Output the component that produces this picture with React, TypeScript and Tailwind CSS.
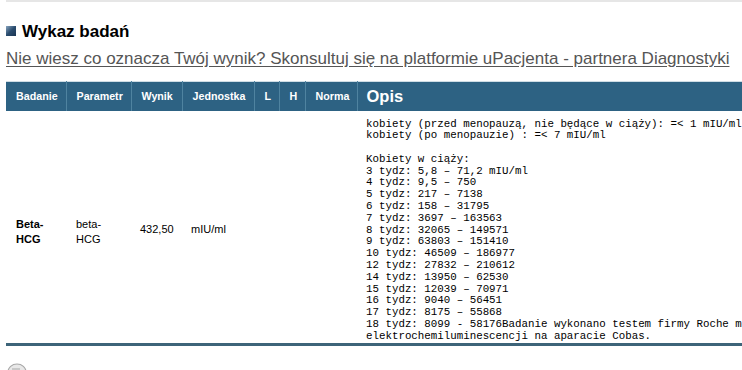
import React from "react";

const opisLines = [
  "kobiety (przed menopauzą, nie będące w ciąży): =< 1 mIU/ml",
  "kobiety (po menopauzie) : =< 7 mIU/ml",
  "",
  "Kobiety w ciąży:",
  "3 tydz: 5,8 – 71,2 mIU/ml",
  "4 tydz: 9,5 – 750",
  "5 tydz: 217 – 7138",
  "6 tydz: 158 – 31795",
  "7 tydz: 3697 – 163563",
  "8 tydz: 32065 – 149571",
  "9 tydz: 63803 – 151410",
  "10 tydz: 46509 – 186977",
  "12 tydz: 27832 – 210612",
  "14 tydz: 13950 – 62530",
  "15 tydz: 12039 – 70971",
  "16 tydz: 9040 – 56451",
  "17 tydz: 8175 – 55868",
  "18 tydz: 8099 - 58176Badanie wykonano testem firmy Roche metodą",
  "elektrochemiluminescencji na aparacie Cobas.",
];

export default function App() {
  const th =
    "h-[29px] pl-[10px] pr-0 text-left align-middle font-bold text-white text-[10.7px] border-l border-[#4f83a0]";
  return (
    <div
      className="w-[742px] h-[370px] overflow-hidden bg-white relative"
      style={{ fontFamily: '"Liberation Sans", Arial, sans-serif' }}
    >
      <div className="ml-[6px] h-[2px] bg-[#e6e6e6]" />
      <div className="pl-[6px]">
        <div className="flex items-center mt-[21px] h-[16px]">
          <div className="w-[10px] h-[10px] bg-gradient-to-br from-[#8aa6c0] via-[#2a4c6e] to-[#1a3552]" />
          <div className="ml-[6px] text-[17px] font-bold text-black leading-none">
            Wykaz badań
          </div>
        </div>
        <div className="mt-[10px] text-[17px] leading-[20px] text-[#555555] underline underline-offset-[2px] whitespace-nowrap">
          Nie wiesz co oznacza Twój wynik? Skonsultuj się na platformie uPacjenta - partnera Diagnostyki
        </div>
        <table className="mt-[12px] border-collapse w-[900px] table-fixed border-t border-[#cfdde5]">
          <colgroup>
            <col className="w-[60px]" />
            <col className="w-[65px]" />
            <col className="w-[51px]" />
            <col className="w-[72px]" />
            <col className="w-[25px]" />
            <col className="w-[26px]" />
            <col className="w-[52px]" />
            <col />
          </colgroup>
          <thead>
            <tr className="bg-[#2d6283]">
              <th className={th + " border-l-0"}>Badanie</th>
              <th className={th}>Parametr</th>
              <th className={th}>Wynik</th>
              <th className={th}>Jednostka</th>
              <th className={th}>L</th>
              <th className={th}>H</th>
              <th className={th}>Norma</th>
              <th className="h-[29px] pl-[9px] text-left align-middle font-bold text-white text-[16.5px] border-l border-[#4f83a0]">
                Opis
              </th>
            </tr>
          </thead>
          <tbody>
            <tr className="border-b-[3px] border-[#3d6479] text-[11px] text-black">
              <td className="pl-[10px] pt-[10px] align-middle font-bold leading-[15px]">
                Beta-
                <br />
                HCG
              </td>
              <td className="pl-[10px] pt-[10px] align-middle leading-[15px]">
                beta-
                <br />
                HCG
              </td>
              <td className="pl-[9px] pt-[6px] align-middle">432,50</td>
              <td className="pl-[9px] pt-[6px] align-middle">mIU/ml</td>
              <td />
              <td />
              <td />
              <td className="pl-[9px] pt-[8px] pb-0 align-top">
                <pre
                  className="m-0 text-[10.8px] leading-[11.8px] text-black whitespace-pre"
                  style={{ fontFamily: '"Liberation Mono", "Courier New", monospace' }}
                >
                  {opisLines.join("\n")}
                </pre>
              </td>
            </tr>
          </tbody>
        </table>
        <div className="mt-[14px]">
          <svg width="22" height="12" viewBox="0 0 22 12">
            <ellipse cx="11" cy="12" rx="9" ry="8" fill="#e8e8e8" stroke="#a8a8a8" strokeWidth="1.2" />
            <rect x="6" y="8" width="8" height="4" fill="#c8c8c8" />
          </svg>
        </div>
      </div>
    </div>
  );
}
